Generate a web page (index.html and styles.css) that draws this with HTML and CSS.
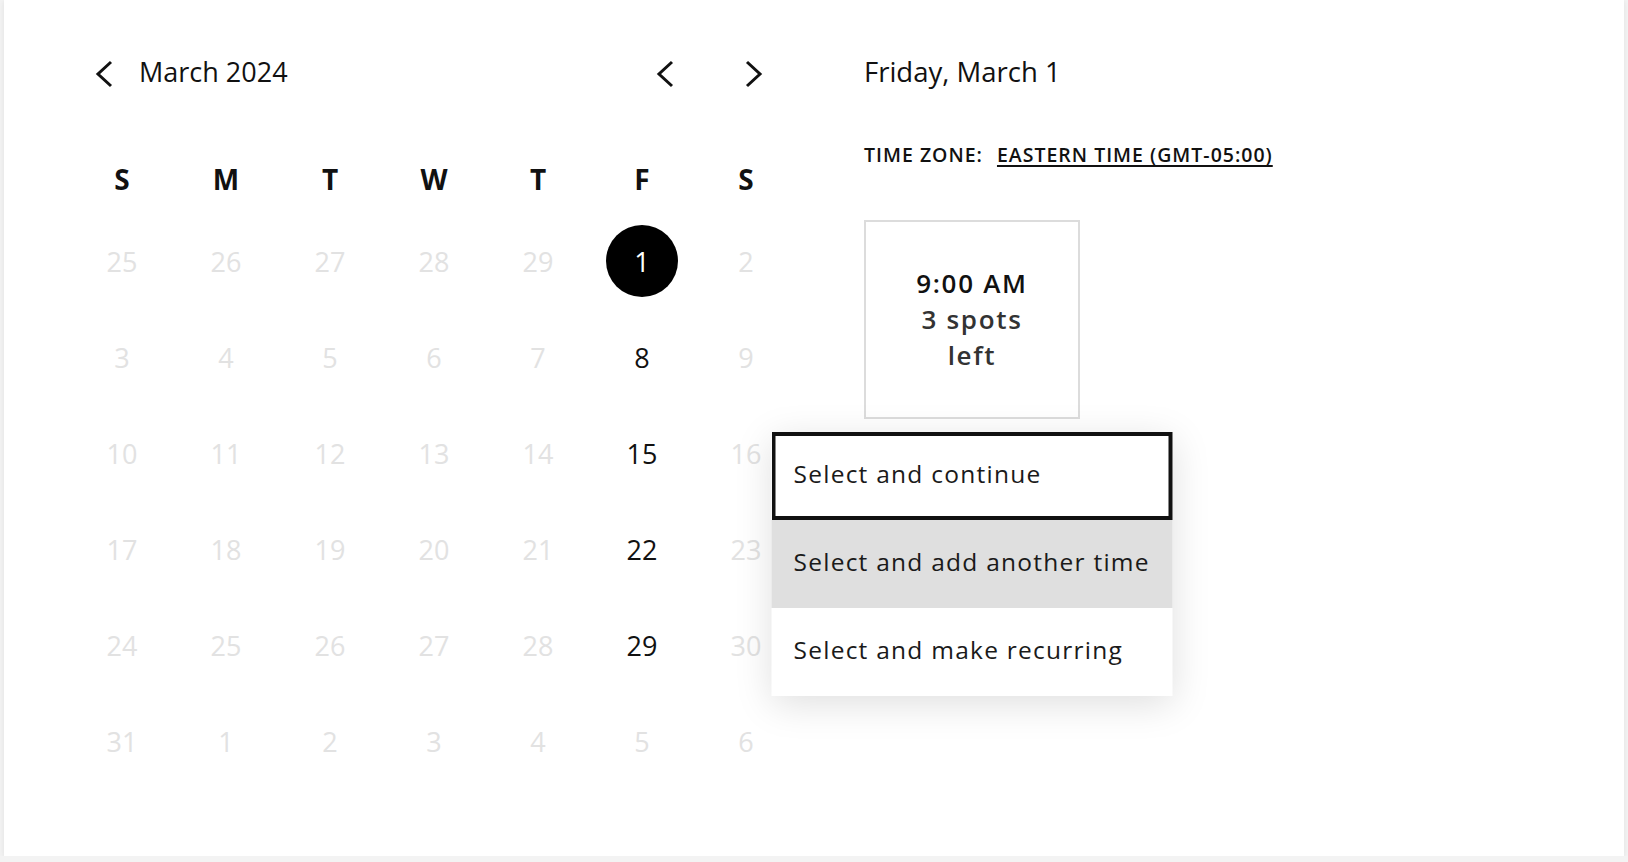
FILE: index.html
```html
<!DOCTYPE html>
<html lang="en">
<head>
<meta charset="utf-8">
<title>Select a time</title>
<link rel="stylesheet" href="styles.css">
</head>
<body>
<div class="card">
  <section class="calendar">
    <div class="cal-head">
      <button class="icon-btn back" aria-label="Back">
        <svg width="20" height="28" viewBox="0 0 20 28"><path d="M17 2 L4 14 L17 26" /></svg>
      </button>
      <h2 class="month">March 2024</h2>
      <div class="nav">
        <button class="icon-btn" aria-label="Previous month">
          <svg width="20" height="28" viewBox="0 0 20 28"><path d="M17 2 L4 14 L17 26" /></svg>
        </button>
        <button class="icon-btn" aria-label="Next month">
          <svg width="20" height="28" viewBox="0 0 20 28"><path d="M3 2 L16 14 L3 26" /></svg>
        </button>
      </div>
    </div>
    <div class="weekdays">
      <span>S</span><span>M</span><span>T</span><span>W</span><span>T</span><span>F</span><span>S</span>
    </div>
    <div class="days">
      <span class="day off">25</span><span class="day off">26</span><span class="day off">27</span><span class="day off">28</span><span class="day off">29</span><span class="day"><span class="selected">1</span></span><span class="day off">2</span>
      <span class="day off">3</span><span class="day off">4</span><span class="day off">5</span><span class="day off">6</span><span class="day off">7</span><span class="day">8</span><span class="day off">9</span>
      <span class="day off">10</span><span class="day off">11</span><span class="day off">12</span><span class="day off">13</span><span class="day off">14</span><span class="day">15</span><span class="day off">16</span>
      <span class="day off">17</span><span class="day off">18</span><span class="day off">19</span><span class="day off">20</span><span class="day off">21</span><span class="day">22</span><span class="day off">23</span>
      <span class="day off">24</span><span class="day off">25</span><span class="day off">26</span><span class="day off">27</span><span class="day off">28</span><span class="day">29</span><span class="day off">30</span>
      <span class="day off">31</span><span class="day off">1</span><span class="day off">2</span><span class="day off">3</span><span class="day off">4</span><span class="day off">5</span><span class="day off">6</span>
    </div>
  </section>

  <section class="times">
    <h2 class="date-title">Friday, March 1</h2>
    <div class="tz">
      <span class="tz-label">TIME ZONE:</span>
      <a class="tz-link" href="#">EASTERN TIME (GMT-05:00)</a>
    </div>
    <div class="slot-wrap">
      <div class="slot">
        <span class="slot-time">9:00 AM</span>
        <span class="slot-spots">3 spots left</span>
      </div>
      <ul class="menu">
        <li class="menu-item focused">Select and continue</li>
        <li class="menu-item hover">Select and add another time</li>
        <li class="menu-item">Select and make recurring</li>
      </ul>
    </div>
  </section>
</div>
</body>
</html>
```
FILE: styles.css
```css
* { box-sizing: border-box; }

html, body {
  margin: 0;
  padding: 0;
}

body {
  background: #f3f3f3;
  font-family: "Open Sans", "Noto Sans", sans-serif;
  color: #111;
}

.card {
  margin: 0 4px;
  height: 856px;
  background: #fff;
  box-shadow: 0 1px 6px rgba(0, 0, 0, 0.08);
  display: flex;
  padding-left: 66px;
}

/* ---------- Calendar ---------- */
.calendar {
  width: 728px;
  padding-top: 44px;
}

.cal-head {
  display: flex;
  align-items: center;
  height: 56px;
  padding-left: 24px;
  padding-right: 34px;
}

.icon-btn {
  border: 0;
  background: none;
  padding: 0;
  margin: 0;
  width: 20px;
  height: 28px;
  display: flex;
  cursor: pointer;
  position: relative;
  top: 2px;
}

.icon-btn svg path {
  fill: none;
  stroke: #111;
  stroke-width: 3;
  stroke-linejoin: miter;
  stroke-linecap: butt;
}

.month {
  margin: 0 0 0 25px;
  font-size: 27px;
  font-weight: 400;
  line-height: 56px;
  color: #111;
  flex: 1;
}

.nav {
  display: flex;
  gap: 69px;
}

.weekdays {
  margin-top: 48px;
  height: 60px;
  margin-bottom: 5px;
  display: grid;
  grid-template-columns: repeat(7, 104px);
  align-items: center;
}

.weekdays span {
  text-align: center;
  font-size: 28px;
  font-weight: 700;
  line-height: 60px;
  color: #111;
  position: relative;
  top: 1px;
}

.days {
  display: grid;
  grid-template-columns: repeat(7, 104px);
  grid-auto-rows: 96px;
}

.day {
  display: flex;
  align-items: center;
  justify-content: center;
  font-size: 27px;
  font-weight: 400;
  color: #111;
}

.day.off {
  color: #e2e2e2;
}

.selected {
  width: 72px;
  height: 72px;
  border-radius: 50%;
  background: #000;
  color: #fff;
  display: flex;
  align-items: center;
  justify-content: center;
}

/* ---------- Times ---------- */
.times {
  margin-left: 66px;
  padding-top: 44px;
}

.date-title {
  margin: 0;
  font-size: 27.5px;
  font-weight: 400;
  line-height: 56px;
  color: #111;
}

.tz {
  margin-top: 43px;
  line-height: 24px;
  font-size: 19.5px;
  font-weight: 600;
  letter-spacing: 1px;
  display: flex;
  align-items: baseline;
}

.tz-label {
  color: #111;
}

.tz-link {
  margin-left: 14px;
  color: #111;
  text-decoration: underline;
  text-decoration-thickness: 2px;
  text-underline-offset: 3px;
}

.slot-wrap {
  margin-top: 53px;
  width: 216px;
  position: relative;
}

.slot {
  height: 199px;
  border: 2px solid #dcdcdc;
  padding: 0 36px 2px;
  display: flex;
  flex-direction: column;
  align-items: center;
  justify-content: center;
  text-align: center;
  font-size: 26px;
  font-weight: 600;
  line-height: 36px;
  letter-spacing: 1.7px;
}

.slot-time {
  color: #111;
}

.slot-spots {
  color: #333;
}

.menu {
  position: absolute;
  top: calc(100% + 13px);
  left: 50%;
  transform: translateX(-50%);
  width: 401px;
  margin: 0;
  padding: 0;
  list-style: none;
  background: #fff;
  box-shadow: 0 8px 36px rgba(0, 0, 0, 0.13);
  z-index: 2;
}

.menu-item {
  height: 88px;
  display: flex;
  align-items: center;
  padding: 0 0 6px 22px;
  font-size: 24.5px;
  letter-spacing: 1.25px;
  color: #1a1a1a;
}

.menu-item.focused {
  box-shadow: inset 0 0 0 4px #111;
}

.menu-item.hover {
  background: #dfdfdf;
}
```
